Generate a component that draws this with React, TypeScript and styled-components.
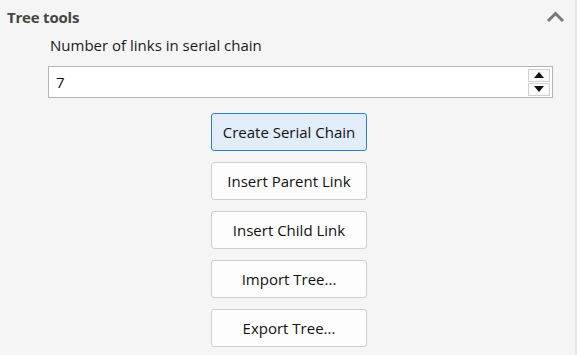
import React from "react";
import styled, { createGlobalStyle } from "styled-components";

const Global = createGlobalStyle`
  html, body { margin: 0; padding: 0; background: #f5f5f5; }
  body { font-family: "Open Sans", "Noto Sans", sans-serif; }
`;

const Panel = styled.div`
  width: 577px;
  height: 355px;
  box-sizing: border-box;
  background: #f5f5f5;
  border-right: 2px solid #e6e6e6;
  overflow: hidden;
`;

const Header = styled.div`
  display: flex;
  align-items: center;
  justify-content: space-between;
  height: 34px;
  padding: 0 10px 0 7px;
`;

const Title = styled.span`
  font-size: 15px;
  font-weight: 700;
  color: #444;
  letter-spacing: -0.2px;
`;

const Body = styled.div`
  display: flex;
  flex-direction: column;
  padding: 0 22px 0 48px;
`;

const Label = styled.div`
  font-size: 15px;
  color: #1a1a1a;
  padding-left: 2px;
  height: 24px;
  line-height: 22px;
`;

const SpinBox = styled.div`
  display: flex;
  align-items: center;
  height: 32px;
  box-sizing: border-box;
  border: 1px solid #b4b4b4;
  background: #fff;
  padding: 0 2px 0 7px;
  margin-top: 8px;
`;

const SpinValue = styled.span`
  flex: 1;
  font-size: 15px;
  color: #111;
`;

const Arrows = styled.div`
  display: flex;
  flex-direction: column;
  gap: 1px;
`;

const ArrowBtn = styled.div`
  width: 22px;
  height: 13px;
  box-sizing: border-box;
  border: 1px solid #d0d0d0;
  background: #fafafa;
  display: flex;
  align-items: center;
  justify-content: center;
`;

const Buttons = styled.div`
  display: flex;
  flex-direction: column;
  align-items: flex-start;
  gap: 11px;
  padding-left: 163px;
  margin-top: 15px;
`;

const Button = styled.button<{ $primary?: boolean }>`
  width: 156px;
  height: 38px;
  box-sizing: border-box;
  border-radius: 3px;
  border: 1px solid ${(p) => (p.$primary ? "#2d7fd6" : "#cfcfcf")};
  background: ${(p) => (p.$primary ? "#e1edf9" : "#fdfdfd")};
  font-family: "Open Sans", "Noto Sans", sans-serif;
  font-size: 15px;
  color: #111;
  padding: 0;
`;

export default function App() {
  return (
    <>
      <Global />
      <Panel>
        <Header>
          <Title>Tree tools</Title>
          <svg width="19" height="12" viewBox="0 0 19 12">
            <path d="M2 10 L9.5 2.5 L17 10" fill="none" stroke="#777" strokeWidth="3" />
          </svg>
        </Header>
        <Body>
          <Label>Number of links in serial chain</Label>
          <SpinBox>
            <SpinValue>7</SpinValue>
            <Arrows>
              <ArrowBtn>
                <svg width="10" height="6" viewBox="0 0 10 6">
                  <path d="M0 6 L5 0 L10 6 Z" fill="#111" />
                </svg>
              </ArrowBtn>
              <ArrowBtn>
                <svg width="10" height="6" viewBox="0 0 10 6">
                  <path d="M0 0 L10 0 L5 6 Z" fill="#111" />
                </svg>
              </ArrowBtn>
            </Arrows>
          </SpinBox>
          <Buttons>
            <Button $primary>Create Serial Chain</Button>
            <Button>Insert Parent Link</Button>
            <Button>Insert Child Link</Button>
            <Button>Import Tree...</Button>
            <Button>Export Tree...</Button>
          </Buttons>
        </Body>
      </Panel>
    </>
  );
}
